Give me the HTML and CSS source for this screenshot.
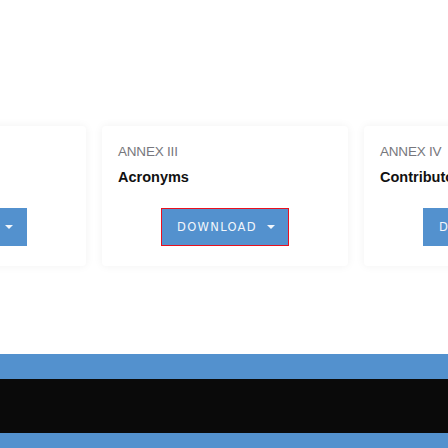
FILE: index.html
```html
<!DOCTYPE html>
<html>
<head>
<meta charset="utf-8">
<link rel="stylesheet" href="styles.css">
</head>
<body>
<div class="page">
  <div class="cards">
    <div class="card">
      <div class="label">&nbsp;</div>
      <div class="title">&nbsp;</div>
      <div class="actions"><button class="btn"><span class="btn-text">DOWNLOAD</span> <span class="caret"></span></button></div>
    </div>
    <div class="card">
      <div class="label">ANNEX III</div>
      <div class="title">Acronyms</div>
      <div class="actions"><button class="btn focus"><span class="btn-text">DOWNLOAD</span> <span class="caret"></span></button></div>
    </div>
    <div class="card">
      <div class="label">ANNEX IV</div>
      <div class="title">Contributors</div>
      <div class="actions"><button class="btn"><span class="btn-text">DOWNLOAD</span> <span class="caret"></span></button></div>
    </div>
  </div>
  <div class="footer">
    <div class="band-blue"></div>
    <div class="band-black"></div>
    <div class="band-blue2"></div>
  </div>
</div>
</body>
</html>
```
FILE: styles.css
```css
html, body {
  margin: 0;
  padding: 0;
  background: #ffffff;
  overflow: hidden;
}
.page {
  width: 448px;
  height: 448px;
  overflow: hidden;
  display: flex;
  flex-direction: column;
}
.cards {
  display: flex;
  gap: 16px;
  margin-top: 126px;
  margin-left: -160px;
  height: 140px;
}
.card {
  flex: 0 0 246px;
  height: 140px;
  box-sizing: border-box;
  background: #fff;
  border-radius: 4px;
  box-shadow: 0 0 10px rgba(0, 0, 0, 0.06);
  padding: 18px 16px 0;
  display: flex;
  flex-direction: column;
}
.card:first-child .btn-text {
  visibility: hidden;
}
.label {
  font-family: "Liberation Sans", Arial, sans-serif;
  font-size: 13.5px;
  line-height: 16px;
  color: #77777d;
  letter-spacing: -0.2px;
}
.title {
  font-family: "Liberation Sans", Arial, sans-serif;
  font-weight: bold;
  font-size: 14.5px;
  line-height: 16px;
  color: #111;
  margin-top: 9px;
}
.actions {
  display: flex;
  justify-content: center;
  margin-top: 23px;
}
.btn {
  width: 128px;
  height: 38px;
  box-sizing: border-box;
  background: #5391ce;
  border: 1px solid #5391ce;
  color: #f2f6fb;
  font-family: "DejaVu Sans", sans-serif;
  font-size: 11.5px;
  letter-spacing: 1.3px;
  display: flex;
  align-items: center;
  justify-content: center;
  gap: 10px;
  padding: 0 0 0 2px;
}
.btn.focus {
  border-color: #e8101e;
}
.caret {
  width: 0;
  height: 0;
  border-left: 4px solid transparent;
  border-right: 4px solid transparent;
  border-top: 4px solid #f2f6fb;
}
.footer {
  margin-top: 88px;
  display: flex;
  flex-direction: column;
}
.band-blue {
  height: 25px;
  background: #5391ce;
}
.band-black {
  height: 54px;
  background: #0a0a0a;
}
.band-blue2 {
  height: 15px;
  background: #5391ce;
}
```
